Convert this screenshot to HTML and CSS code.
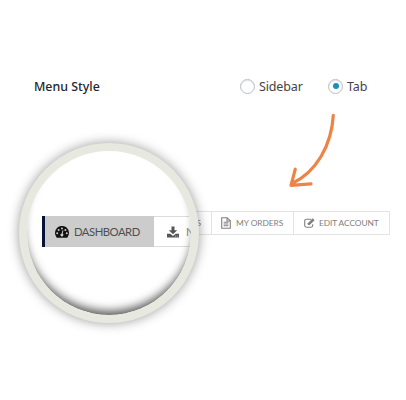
FILE: index.html
```html
<!DOCTYPE html>
<html lang="en">
<head>
<meta charset="utf-8">
<title>Menu Style</title>
<link rel="stylesheet" href="styles.css">
</head>
<body>
<main class="stage">
  <div class="setting">
    <span class="setting-name">Menu Style</span>
    <div class="option option-sidebar"><span class="radio"></span><span class="option-text sidebar-text">Sidebar</span></div>
    <div class="option"><span class="radio checked"></span><span class="option-text">Tab</span></div>
  </div>

  <nav class="tabs">
    <div class="tab tab-hidden"><span>S</span></div>
    <div class="tab tab-orders">
      <svg class="icon-file" viewBox="0 0 10 12"><path d="M.7.7h5.500l3.100 3v7.600H.7zM6 .8V4h3.200M2.600 5.200h4.800M2.600 7h4.800M2.600 8.800h4.800" fill="none" stroke="currentColor" stroke-width="1.1"/></svg>
      <span>MY ORDERS</span>
    </div>
    <div class="tab tab-account">
      <svg class="icon-edit" viewBox="0 0 11 10"><path d="M7.200 1.200H2.300Q.7 1.200.7 2.800v4.800q0 1.600 1.600 1.600h4.800q1.600 0 1.600-1.600V6.200" fill="none" stroke="currentColor" stroke-width="1.1"/><path d="M8.700.3l1.900 1.900-4.900 4.900H3.800V5.200z" fill="currentColor"/></svg>
      <span>EDIT ACCOUNT</span>
    </div>
  </nav>

  <svg class="arrow" viewBox="0 0 50 78"><path d="M46.300 3.300C44.500 33 29.500 60 5 71.500M8.300 57.200L4 73.300L24 71.800" fill="none" stroke="#ed8345" stroke-width="3.200" stroke-linecap="round" stroke-linejoin="round"/></svg>

  <div class="lens">
    <div class="lens-tabs">
      <div class="big-tab active">
        <svg class="icon-dash" viewBox="0 0 14 12"><path d="M1.600 11.400A7 7 0 1 1 12.400 11.400Q12.200 11.700 11.700 11.700H2.300Q1.800 11.700 1.600 11.400Z" fill="#111"/><g fill="#ccc"><circle cx="2.200" cy="7.300" r="1"/><circle cx="3.600" cy="4" r="1"/><circle cx="7" cy="2.600" r="1"/><circle cx="10.400" cy="4" r="1"/><circle cx="11.800" cy="7.300" r="1"/><path d="M7.500 4.300l.9.250-.7 3.100a1.500 1.500 0 1 1-1-.2z"/></g></svg>
        <span class="dash-text">DASHBOARD</span>
      </div>
      <div class="big-tab next">
        <svg class="icon-download" viewBox="0 0 12 12"><path d="M4.500.4h3v3.800h2.700L6 8.300 1.800 4.200h2.700zM0 7.700h3.400L6 10l2.600-2.300H12v3.900H0z" fill="#555"/><path d="M8.200 10.100h.8M9.900 10.100h.8" stroke="#fff" stroke-width=".7"/></svg>
        <span>N</span>
      </div>
    </div>
  </div>
</main>
</body>
</html>
```
FILE: styles.css
```css
* { box-sizing: border-box; }
body { margin: 0; background: #fff; }
.stage { position: relative; width: 406px; height: 400px; overflow: hidden; padding-top: 76px; }

.setting { display: flex; align-items: center; height: 20px; padding-left: 34px; font: 12.5px/20px "Noto Sans", sans-serif; color: #444; }
.setting-name { width: 206px; padding-top: 1px; font-weight: 500; color: #23282d; font-size: 12.4px; }
.option { display: flex; align-items: center; gap: 4px; }
.option-sidebar { width: 88px; }
.option-text { padding-top: 1px; letter-spacing: -.15px; }
.radio { display: grid; place-items: center; width: 15px; height: 15px; border: 1px solid #b9bec4; border-radius: 50%; box-shadow: inset 0 1px 1px #e5e5e5; }
.checked::before { content: ""; width: 6px; height: 6px; border-radius: 50%; background: #1e8cbe; }

.tabs { display: flex; width: 269px; height: 24px; margin: 115px 0 0 121px; border: 1px solid #e3e3e3; font: 8.4px/22px Lato, sans-serif; color: #808080; }
.tab { display: flex; align-items: center; white-space: nowrap; }
.tab + .tab { border-left: 1px solid #e3e3e3; }
.tab-hidden { width: 89px; justify-content: flex-end; padding-right: 10px; }
.tab-orders { width: 82px; padding-left: 9px; gap: 5px; letter-spacing: -.05px; }
.tab-account { flex: 1; padding-left: 10px; gap: 4px; letter-spacing: -.1px; }
.icon-file { width: 10px; height: 12px; }
.icon-edit { width: 11px; height: 10px; }

.arrow { position: absolute; left: 287px; top: 112px; width: 50px; height: 78px; }

.lens { position: absolute; left: 19px; top: 142.5px; width: 180px; height: 180px; border: 8px solid #e7e8df; border-radius: 50%; background: #fff; box-shadow: 0 0 12px rgba(0,0,0,.4); overflow: hidden; padding: 65.5px 0 0 15px; }
.lens::after { content: ""; position: absolute; inset: 0; border-radius: 50%; box-shadow: inset 0 -8px 10px -4px rgba(0,0,0,.65); }
.lens-tabs { display: flex; width: 180px; height: 31px; border: 1px solid #ddd; border-left: 0; font: 11.3px/29px Lato, sans-serif; color: #505050; }
.big-tab { display: flex; align-items: center; white-space: nowrap; }
.active { width: 112px; margin: -1px 0; padding-left: 10px; gap: 5px; border-left: 3px solid #061437; background: #ccc; letter-spacing: -.5px; }
.next { padding-left: 13px; gap: 7px; color: #888; }
.icon-dash { width: 14px; height: 12px; }
.icon-download { width: 12px; height: 12px; }
```
